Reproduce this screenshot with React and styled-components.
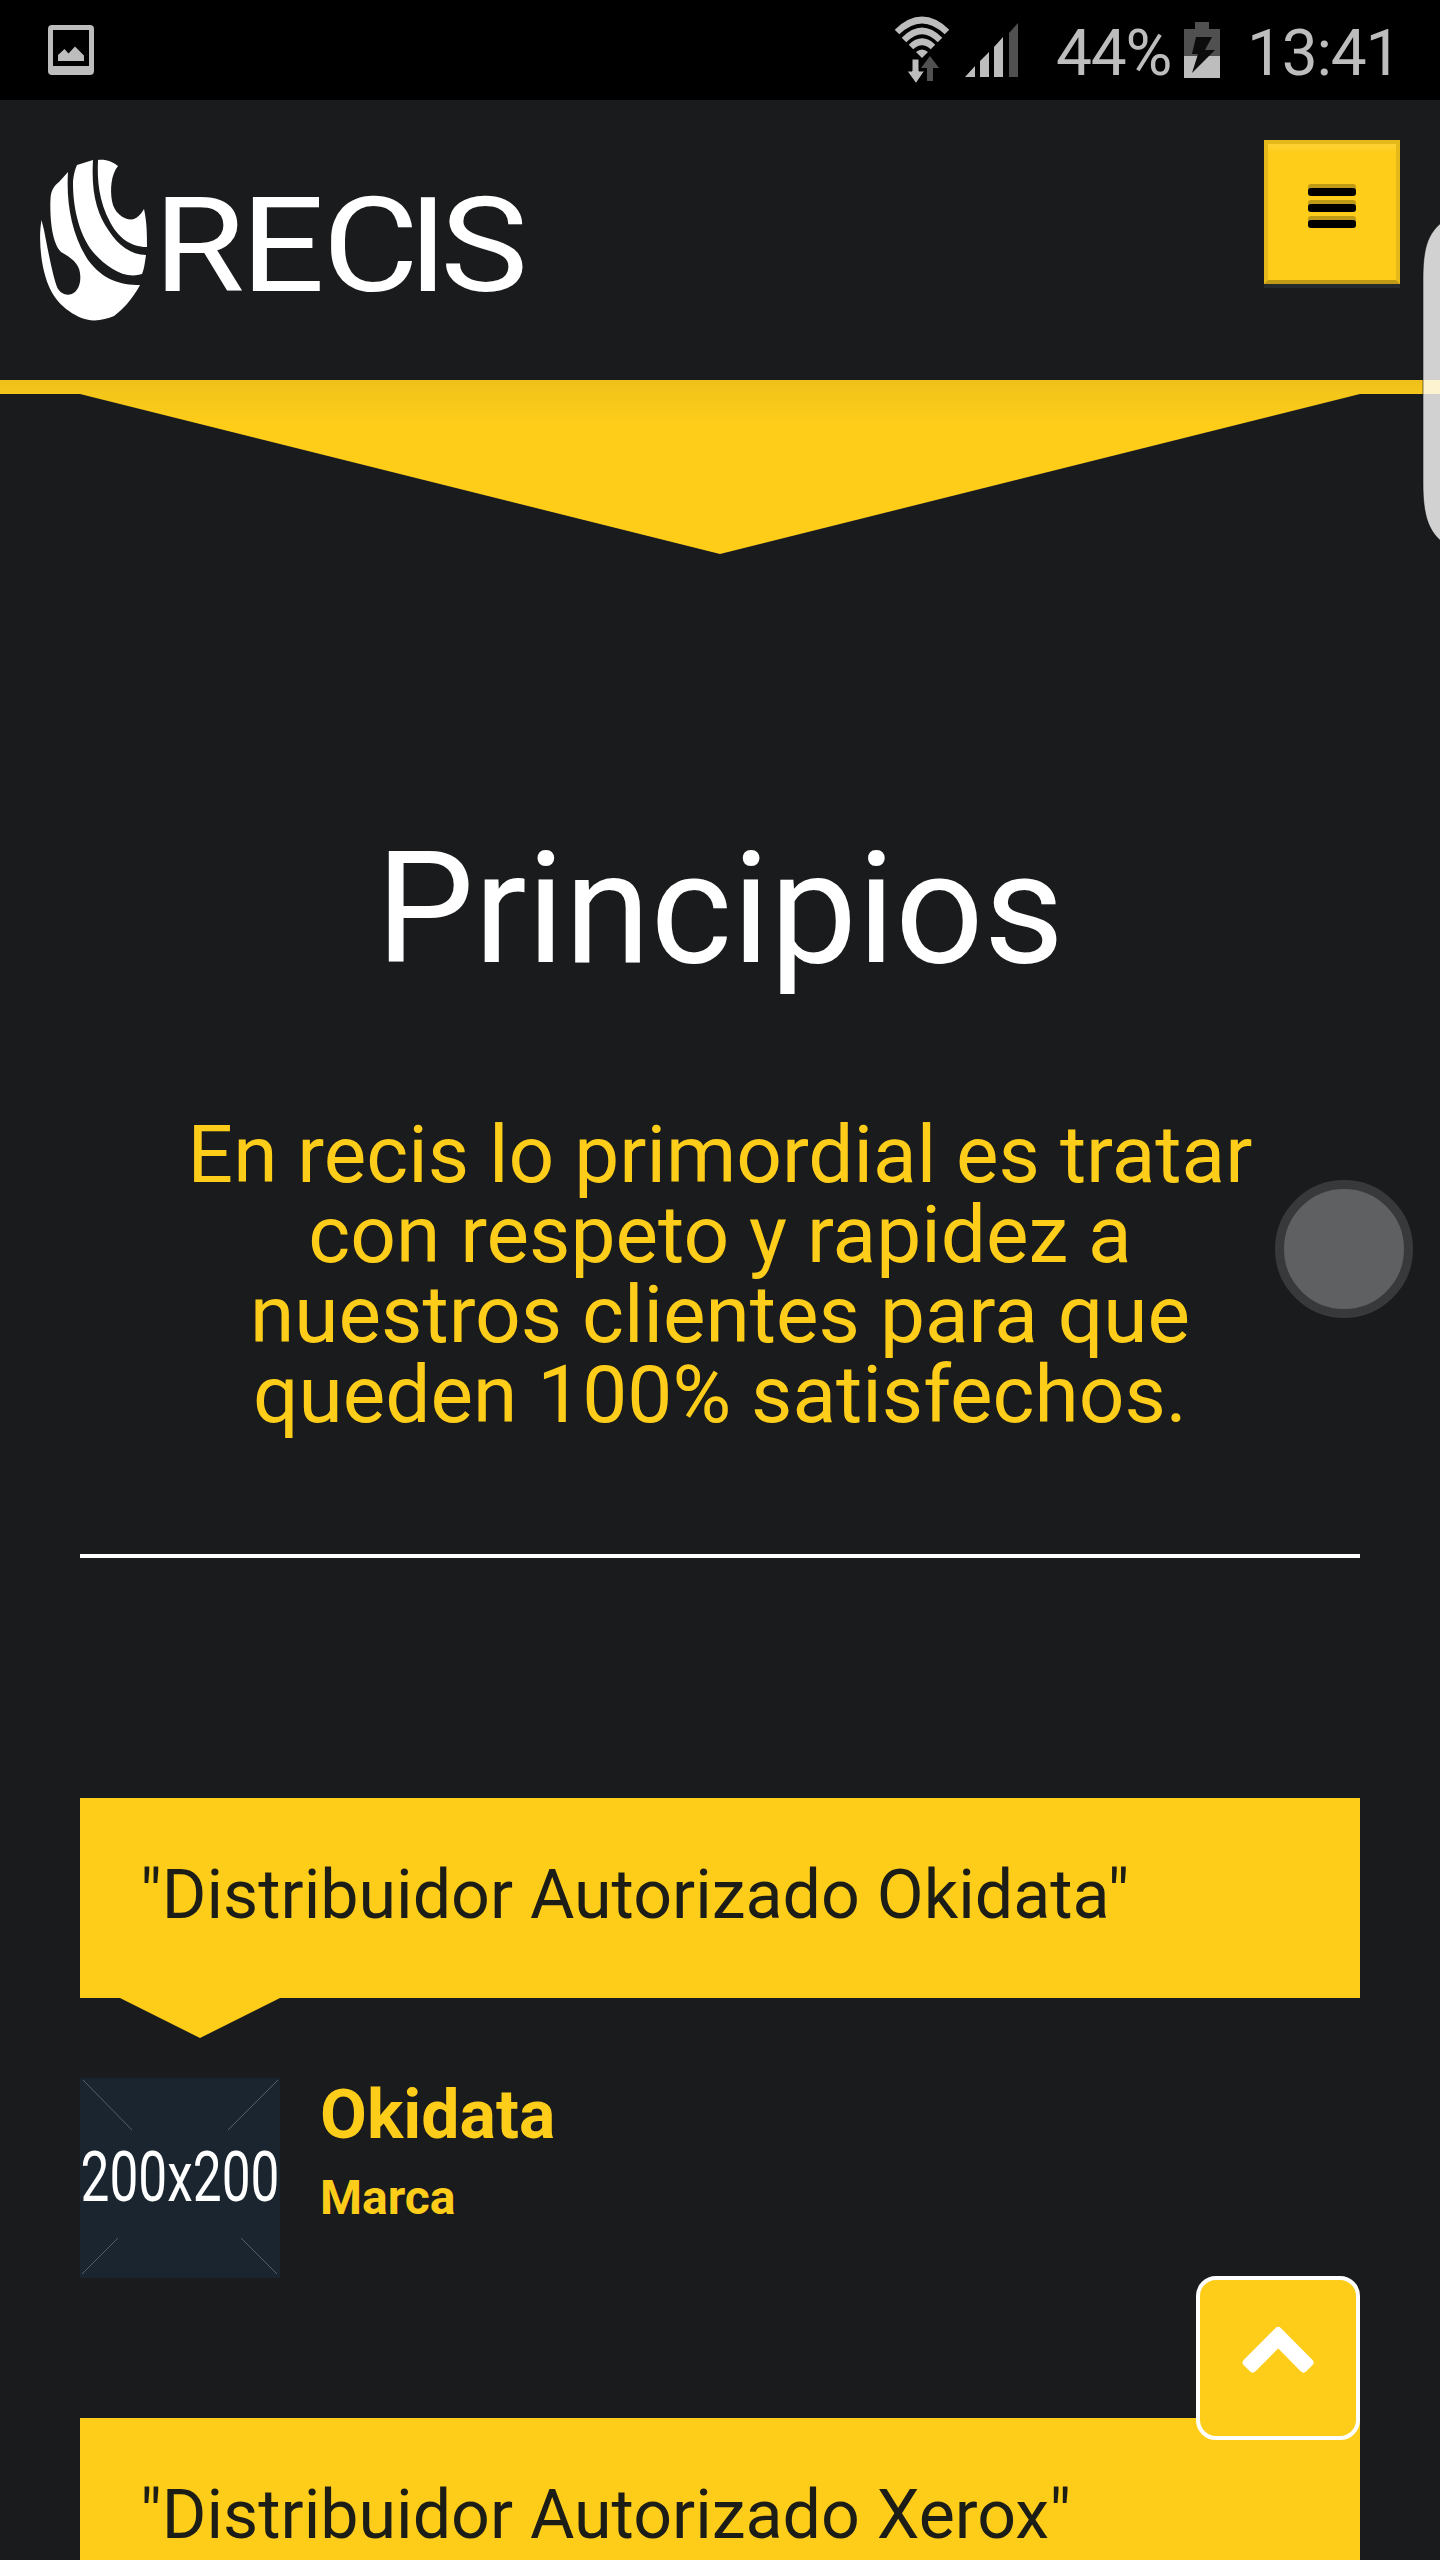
import React from 'react';
import styled, { createGlobalStyle } from 'styled-components';

const GlobalStyle = createGlobalStyle`
  * {
    box-sizing: border-box;
  }

  body {
    margin: 0;
    background-color: #191b1c;
    font-family: Roboto, 'Liberation Sans', sans-serif;
  }
`;

// One phone screen, everything below the fold is cut off
const Screen = styled.div`
  position: relative;
  width: 1440px;
  height: 2560px;
  overflow: hidden;
  background-color: #191b1c;
`;

const StatusBar = styled.div`
  display: flex;
  align-items: center;
  justify-content: space-between;
  height: 100px;
  padding: 0 43px 0 48px;
  background-color: #000;
`;

const StatusGroup = styled.div`
  display: flex;
  align-items: center;
`;

const StatusText = styled.span`
  width: ${({ $width }) => $width}px;
  margin-left: ${({ $gap }) => $gap}px;
  padding-top: 7px;
  color: #bdbdbd;
  font-size: 64px;
  line-height: 93px;
  letter-spacing: -1.2px;
  white-space: nowrap;
`;

const Icon = styled.svg`
  display: block;
  flex: none;
  margin-left: ${({ $gap }) => $gap || 0}px;
`;

const Header = styled.header`
  display: flex;
  align-items: flex-start;
  justify-content: space-between;
  height: 280px;
  padding: 40px 40px 0;
`;

const MenuButton = styled.button`
  display: flex;
  flex-direction: column;
  align-items: center;
  gap: 8px;
  width: 136px;
  height: 144px;
  padding: 44px 0 0;
  border: 4px solid #e5b91a;
  border-bottom-color: #bf9a15;
  border-radius: 0;
  background-color: #fecd1a;
  box-shadow: inset 0 4px 0 #fed030, inset 0 8px 4px -2px #fecf28, 0 4px 0 #242a2d;
`;

const MenuLine = styled.span`
  width: 48px;
  height: 8px;
  border-radius: 3px;
  background-color: #000;
  box-shadow: 0 -4px 0 #bf9a15;
`;

const Divider = styled.div`
  height: 14px;
  background: linear-gradient(#efc01a, #f4c51a);
`;

const Arrow = styled.div`
  width: 1280px;
  height: 160px;
  margin: 0 auto;
  background: linear-gradient(#f4c51a, #fecd1a 30px);
  clip-path: polygon(0 0, 100% 0, 50% 100%);
`;

const Section = styled.section`
  padding: 263px 80px 0;
  text-align: center;
`;

const Title = styled.h1`
  margin: 0;
  color: #fff;
  font-size: 155.6px;
  font-weight: 400;
  line-height: 184px;
`;

const Lead = styled.p`
  margin: 114px 0 0;
  color: #fecd1a;
  font-size: 80.2px;
  line-height: 80px;
`;

const Rule = styled.hr`
  height: 4px;
  margin: 119px 0 240px;
  border: 0;
  background-color: #fff;
`;

const Quote = styled.article`
  margin: 0 80px 140px;
`;

const QuoteText = styled.div`
  position: relative;
  height: 200px;
  padding: 57px 60px 0;
  background-color: #fecd1a;
  color: #1d1d17;
  font-size: 68.15px;
  line-height: 80px;
  white-space: nowrap;

  &::after {
    content: '';
    position: absolute;
    top: 100%;
    left: 40px;
    border: solid transparent;
    border-width: 40px 80px 0;
    border-top-color: #fecd1a;
  }
`;

const Author = styled.div`
  display: flex;
  gap: 40px;
  margin-top: 80px;
`;

const AuthorName = styled.div`
  padding-top: 3px;
  color: #fecd1a;
  font-size: 68px;
  font-weight: 700;
  line-height: 68px;
`;

const AuthorRole = styled.div`
  margin-top: 25px;
  color: #fecd1a;
  font-size: 48px;
  font-weight: 700;
  line-height: 48px;
`;

// Floating controls that stay above the page
const ScrollTop = styled.button`
  position: absolute;
  right: 80px;
  bottom: 120px;
  width: 164px;
  height: 164px;
  padding: 0;
  border: 4px solid #fff;
  border-radius: 20px;
  background-color: #fecd1a;
`;

const TouchDot = styled.div`
  position: absolute;
  top: 1180px;
  left: 1275px;
  width: 138px;
  height: 138px;
  border: 9px solid #38393b;
  border-radius: 50%;
  background-color: #5f6062;
`;

const EdgeHandle = styled.svg`
  position: absolute;
  top: 216px;
  right: 0;
`;

const PictureIcon = () => (
  <Icon width="46" height="50" viewBox="0 0 46 50" fill="#bdbdbd">
    <path fillRule="evenodd" d="M4 0h38a4 4 0 0 1 4 4v42a4 4 0 0 1-4 4H4a4 4 0 0 1-4-4V4a4 4 0 0 1 4-4zM5 5v36h36V5z" />
    <path d="M10 36v-6l6.5-6 4 4.5L27 21.500l9 9V36z" />
  </Icon>
);

const WifiIcon = () => (
  <Icon width="56" height="68" viewBox="0 0 56 68">
    <g fill="none" stroke="#bdbdbd" strokeWidth="6.500">
      <path d="M3 16Q28-8 53 16" />
      <path d="M10 24Q28 6 46 24" />
      <path d="M17 31Q28 20.500 39 31" />
    </g>
    <path fill="#bdbdbd" d="M22 36q6-5 12 0l-6 6z" />
    <path fill="#505050" d="M36 40l9 12h-6v13h-6V52h-6z" />
    <path fill="#bdbdbd" stroke="#000" strokeWidth="1" d="M18 43h7v12h5.500L22 67.500 13 55h5z" />
  </Icon>
);

const SignalIcon = () => (
  <Icon $gap={15} width="55" height="54" viewBox="0 0 55 54">
    <path fill="#bdbdbd" d="M0 54L10 43v11zM15 54V38l9-9v25zM29 54V24l9-10v40z" />
    <path fill="#505050" d="M44 54V10L53 0v54z" />
  </Icon>
);

const BatteryIcon = () => (
  <Icon $gap={12} width="36" height="56" viewBox="0 0 36 56">
    <path fill="#505050" d="M11 0h14v7h11v27H0V7h11z" />
    <path fill="#bdbdbd" d="M0 34h36v22H0z" />
    <path fill="#0c0c0c" d="M12 15h16l-7 13h10L8 51l6-19H8z" />
  </Icon>
);

const Logo = () => (
  <svg width="490" height="190" viewBox="40 140 490 190" fill="#fff">
    <path d="M41.500 220L44 230C49 256 53 276 57 287C62 298 77 298 80 282C82 266 75 260 61 252C50 241 50 209 50.500 199C51 190 54 186 59 182L68 172C66 204 72 235 88 260C103 280 120 285 140 285C132 300 122 310 114 316C104 320 92 323 79 317C60 307 49 295 43 267C40 252 39 234 41.500 220z" />
    <path d="M77 165L93 160C91 193 97 214 109 231C118 245 131 255 146 255C145 262 144 270 142 274C124 280 105 266 93 252C77 232 73 202 73 184C73 177 75 169 77 165z" />
    <path d="M98 160C106 159 113 162 118 166C111 175 110 189 112 201C114 213 124 220 132 219.500C139 218 142 212 144 209C147 222 147 236 147 247C130 247 118 237 110 222C99 201 97 181 98 160z" />
    {/* the wordmark is wider than the regular face */}
    <text
      transform="translate(0 291) scale(1.12 1)"
      fontFamily="Roboto, 'Liberation Sans', sans-serif"
      fontSize="132"
      fontWeight="400"
      x="137 215 288 364 393"
    >
      RECIS
    </text>
  </svg>
);

const Placeholder = () => (
  <svg width="200" height="200" viewBox="0 0 200 200">
    <rect width="200" height="200" fill="#1a2530" />
    <path stroke="#57606a" strokeWidth="1" d="M3 2l49 50M198 2l-50 50M2 196l36-36M197 196l-36-36" />
    <text
      x="0.500"
      y="123"
      fill="#fff"
      fontFamily="Roboto, 'Liberation Sans', sans-serif"
      fontSize="71"
      textLength="199"
      lengthAdjust="spacingAndGlyphs"
    >
      200x200
    </text>
  </svg>
);

const App = () => {
  const quotes = [
    { text: '"Distribuidor Autorizado Okidata"', name: 'Okidata', role: 'Marca' },
    { text: '"Distribuidor Autorizado Xerox"' },
  ];

  return (
    <>
      <GlobalStyle />
      <Screen>
        <StatusBar>
          <PictureIcon />
          <StatusGroup>
            <WifiIcon />
            <SignalIcon />
            <StatusText $width={116} $gap={36}>44%</StatusText>
            <BatteryIcon />
            <StatusText $width={150} $gap={27}>13:41</StatusText>
          </StatusGroup>
        </StatusBar>

        <Header>
          <Logo />
          <MenuButton>
            <MenuLine />
            <MenuLine />
            <MenuLine />
          </MenuButton>
        </Header>
        <Divider />
        <Arrow />

        <Section>
          <Title>Principios</Title>
          <Lead>
            En recis lo primordial es tratar
            <br />
            con respeto y rapidez a
            <br />
            nuestros clientes para que
            <br />
            queden 100% satisfechos.
          </Lead>
          <Rule />
        </Section>

        {quotes.map((quote, index) => (
          <Quote key={index}>
            <QuoteText>{quote.text}</QuoteText>
            {quote.name && (
              <Author>
                <Placeholder />
                <div>
                  <AuthorName>{quote.name}</AuthorName>
                  <AuthorRole>{quote.role}</AuthorRole>
                </div>
              </Author>
            )}
          </Quote>
        ))}

        <TouchDot />
        <EdgeHandle width="18" height="330" viewBox="0 0 18 330">
          <path fill="#fff" fillOpacity="0.8" stroke="#000" strokeOpacity="0.5" d="M19 7C6 18 1 32 1 62V268C1 298 6 314 19 325z" />
        </EdgeHandle>
        <ScrollTop>
          <svg width="156" height="156" viewBox="0 0 156 156">
            <path
              fill="#fff"
              stroke="#fff"
              strokeWidth="8"
              strokeLinejoin="round"
              d="M78.200 51L46.700 82.500L52.700 88.500L78.200 62.700L103.500 88.500L109.500 82.500z"
            />
          </svg>
        </ScrollTop>
      </Screen>
    </>
  );
};

export default App;
